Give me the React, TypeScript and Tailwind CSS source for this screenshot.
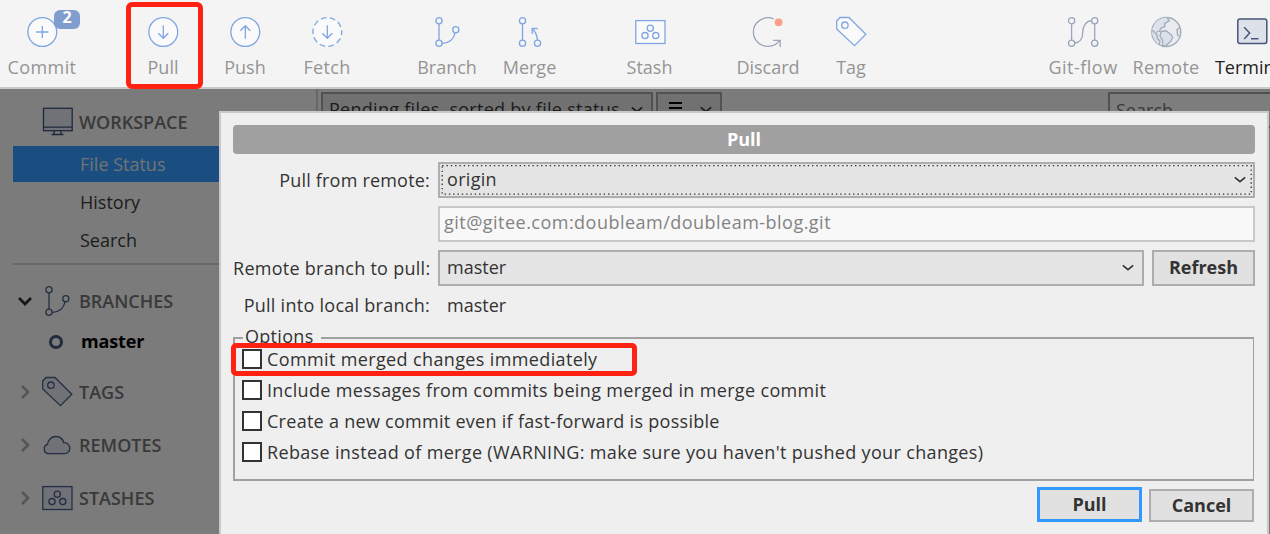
import type { ReactNode } from "react";

type IconProps = { className?: string };

function Icon({ className = "", children }: IconProps & { children: ReactNode }) {
  return (
    <svg viewBox="0 0 32 32" className={`h-8 w-8 shrink-0 ${className}`} fill="none" stroke="currentColor" strokeWidth="1.3">
      {children}
    </svg>
  );
}

const CommitIcon = () => (
  <Icon>
    <circle cx="16.3" cy="16" r="14.4" fill="#fafafb" />
    <path d="M10.3 16h12M16.3 10v12" />
  </Icon>
);

const PullIcon = () => (
  <Icon>
    <circle cx="16.3" cy="16" r="14.4" fill="#fafafb" />
    <path d="M16.3 9.3v13M11.3 17.3l5 5 5-5" />
  </Icon>
);

const PushIcon = () => (
  <Icon>
    <circle cx="16.3" cy="16" r="14.4" fill="#fafafb" />
    <path d="M16.3 22.7v-13M11.3 14.7l5-5 5 5" />
  </Icon>
);

const FetchIcon = () => (
  <Icon>
    <circle cx="16.3" cy="16" r="14.4" fill="#fafafb" strokeDasharray="5.8 3.25" strokeDashoffset="2.5" />
    <path d="M16.3 9.3v13M11.3 17.3l5 5 5-5" />
  </Icon>
);

const BranchIcon = ({ className }: IconProps) => (
  <Icon className={className}>
    <circle cx="8" cy="4.7" r="3.1" />
    <circle cx="8" cy="27.3" r="3.1" />
    <circle cx="24.8" cy="13.7" r="3.1" />
    <path d="M8 7.8v16.4M11.1 27.3c6.5.3 12-4 12.7-10.6" />
  </Icon>
);

const MergeIcon = () => (
  <Icon>
    <circle cx="8.5" cy="4.7" r="3.1" />
    <circle cx="8.5" cy="27.3" r="3.1" />
    <circle cx="23.5" cy="27.3" r="3.1" />
    <path d="M8.5 7.8v16.4M23.4 24.2c0-4-1.6-8-5.2-11.5M18.2 18v-5.5h5.4" />
  </Icon>
);

const StashIcon = ({ className, fill = "#fafafb" }: IconProps & { fill?: string }) => (
  <Icon className={className}>
    <rect x="1.8" y="4.6" width="29.2" height="22.9" fill={fill} />
    <circle cx="16.3" cy="12.3" r="3.1" />
    <circle cx="11" cy="19.6" r="3.1" />
    <circle cx="21.8" cy="19.6" r="3.1" />
  </Icon>
);

const DiscardIcon = () => (
  <Icon className="text-[#9aa5b8]">
    <path d="M21.6 2.8C12.6-.8 1.4 5.5 1.4 16c0 8 6.5 14.4 14.4 14.4 5.4 0 9.800-2.600 12-6.200M21.200 24.300h7v6.700" />
    <circle cx="26.6" cy="6.3" r="3.9" fill="#fb9e8a" stroke="none" />
  </Icon>
);

const TagIcon = ({ className, fill = "#fafafb" }: IconProps & { fill?: string }) => (
  <Icon className={className}>
    <path d="M1.7 5 5 1.5h9l16.8 16.7L19.5 29.7 1.7 13z" fill={fill} />
    <circle cx="9.9" cy="9.2" r="3.2" />
  </Icon>
);

const GitFlowIcon = () => (
  <Icon className="text-[#9aa5b8]">
    <circle cx="4.6" cy="4.7" r="3.1" />
    <circle cx="4.6" cy="27.3" r="3.1" />
    <circle cx="27.7" cy="4.7" r="3.1" />
    <circle cx="27.7" cy="27.3" r="3.1" />
    <path d="M4.6 7.8v16.4M27.7 7.8v16.4M7.7 27c5-.5 8-4 8-10.5S19 5 24.6 4.7" />
  </Icon>
);

const RemoteIcon = () => (
  <Icon className="text-[#a2acbb]">
    <circle cx="16.3" cy="16" r="14.5" fill="#e9ebef" />
    <path d="M4 8.500C7 4 11.500 1.600 17 1.500l2 3.300-4.500 3 .5 3-4.500 1.500-1 3-3.500.5 5.500 4.500-.5 9.200C4 26.500 1 19 2.500 12l3.500 3z" fill="#dbe0e9" stroke="none" />
    <path d="M17 1.500l2.200 3.300-4.700 2.800.5 3-4 1.500-1.500 3.200-3 .9M2.300 14l4.500 4.500.5 4 2.500 2.500-.3 4" />
    <path d="m11 15.500 5-.7 5.500 4.200 1.200 2.500-2 3.800-4.500 4-3.400 1-.3-6.300-2.500-4z" fill="#dbe0e9" />
    <path d="M29.800 11.500 27 13.500l.5 5.500 2 1.500" fill="#dbe0e9" />
  </Icon>
);

const TerminalIcon = () => (
  <Icon className="text-[#475678]">
    <rect x="1.8" y="3" width="29" height="24.4" rx="2.2" fill="#dde1ea" strokeWidth="1.5" />
    <path d="m8.200 11.200 5.500 5.800-5.500 6M15 22.800h7.500" strokeWidth="1.5" />
  </Icon>
);

const MonitorIcon = () => (
  <Icon className="text-[#1f283c]">
    <rect x="2.5" y="2.3" width="28.7" height="22.4" fill="#707277" />
    <path d="M2.500 21.200h28.700M13.500 25l-.8 3M19.500 25l.8 3M10.500 28.500h12" />
  </Icon>
);

const CloudIcon = () => (
  <Icon className="text-[#252f43]">
    <path d="M7.600 24.700a4.800 4.800 0 0 1-1-9.400C7 10.800 10.300 7.500 14.800 7.500c4 0 7 2.300 7.800 6.200 3.800-.4 6.200 2.400 6.200 5.600 0 3-2.300 5.400-5.400 5.400z" fill="#707277" />
  </Icon>
);

function Chevron({ className = "" }: IconProps) {
  return (
    <svg viewBox="0 0 12 8" className={`h-2 w-3 shrink-0 ${className}`} fill="none" stroke="currentColor" strokeWidth="1.6">
      <path d="m.8 1.300 5.200 4.400 5.200-4.400" />
    </svg>
  );
}

function Tool({ label, icon, className = "", textClass = "text-[#949494]" }: { label: string; icon: ReactNode; className?: string; textClass?: string }) {
  return (
    <div className={`relative flex h-[87px] w-[82px] shrink-0 flex-col items-center pt-4 text-[#7fa6e2] ${className}`}>
      {icon}
      <span className={`mt-1.5 text-[18px] leading-[26px] whitespace-nowrap ${textClass}`}>{label}</span>
    </div>
  );
}

function Section({ open, icon, label, className = "" }: { open?: boolean; icon: ReactNode; label: string; className?: string }) {
  return (
    <div className={`flex h-8 items-center pl-[17px] ${className}`}>
      <svg viewBox="0 0 16 16" className={`h-4 w-4 ${open ? "text-[#171717]" : "text-[#565656]"}`} fill="none" stroke="currentColor" strokeWidth="2.7">
        <path d={open ? "M2 5l6 6 6-6" : "M5 2l6 6-6 6"} />
      </svg>
      <div className="ml-2 flex items-center">{icon}</div>
      <span className="ml-1.5 text-[18px] font-semibold text-[#393939]">{label}</span>
    </div>
  );
}

function Option({ label, textClass }: { label: string; textClass: string }) {
  return (
    <label className="flex h-[31px] items-center">
      <span className="h-5 w-5 shrink-0 border-2 border-[#333] bg-white" />
      <span className={`ml-[5px] whitespace-nowrap ${textClass}`}>{label}</span>
    </label>
  );
}

export default function App() {
  return (
    <div className="relative flex h-[534px] w-[1270px] flex-col overflow-hidden bg-[#7b7b7b] font-['Open_Sans',sans-serif] text-[18px] leading-6 text-[#333]">
      <header className="flex h-[89px] shrink-0 border-b-2 border-[#c9c9c9] bg-[#f4f4f4] pl-[1px]">
        <Tool
          label="Commit"
          textClass="tracking-[0.4px] text-[#949494]"
          icon={
            <>
              <CommitIcon />
              <span className="absolute top-[10px] left-[53px] h-[19px] w-[26px] rounded-md bg-[#7f9ecd] text-center text-[16px] leading-[15px] font-bold text-white">2</span>
            </>
          }
        />
        <Tool label="Pull" icon={<PullIcon />} className="ml-[39px]" />
        <Tool label="Push" icon={<PushIcon />} />
        <Tool label="Fetch" icon={<FetchIcon />} textClass="tracking-[0.3px] text-[#949494]" />
        <Tool label="Branch" icon={<BranchIcon />} className="ml-[38px]" />
        <Tool label="Merge" icon={<MergeIcon />} className="ml-[0.5px]" />
        <Tool label="Stash" icon={<StashIcon />} className="ml-[38px]" />
        <Tool label="Discard" icon={<DiscardIcon />} className="ml-[36.5px]" />
        <Tool label="Tag" icon={<TagIcon />} className="ml-[1px]" />
        <Tool label="Git-flow" icon={<GitFlowIcon />} className="ml-[150px]" textClass="tracking-[0.5px] text-[#949494]" />
        <Tool label="Remote" icon={<RemoteIcon />} className="ml-[1px]" textClass="tracking-[0.3px] text-[#949494]" />
        <Tool label="Terminal" icon={<TerminalIcon />} className="ml-[4px]" textClass="text-[#222]" />
      </header>

      <div className="flex flex-1">
        <aside className="w-[318px] shrink-0 border-r-2 border-[#676767] pt-[17px]">
          <div className="flex h-8 items-center pl-[41px]">
            <MonitorIcon />
            <span className="ml-1.5 font-semibold text-[#393939]">WORKSPACE</span>
          </div>
          <div className="mt-2 ml-[13px] flex h-9 items-center bg-[#1a4e80] pl-[67px] text-[#747474]">File Status</div>
          <div className="mt-px ml-[13px] flex h-[38px] items-center pl-[67px] text-[#1b1b1b]">History</div>
          <div className="ml-[13px] flex h-[38px] items-center pl-[67px] text-[#1b1b1b]">Search</div>
          <div className="mt-[4px] ml-[13px] h-0.5 bg-[#676767]" />
          <Section open icon={<BranchIcon className="text-[#252f43]" />} label="BRANCHES" className="mt-[20px]" />
          <div className="mt-[13px] flex h-6 items-center pl-[49px] font-bold text-black">
            <span className="h-[14px] w-[14px] rounded-full border-[3px] border-[#1f2a3d]" />
            <span className="ml-[18px] pb-0.5 tracking-[-0.15px]">master</span>
          </div>
          <Section icon={<TagIcon className="text-[#252f43]" fill="#707277" />} label="TAGS" className="mt-[22px]" />
          <Section icon={<CloudIcon />} label="REMOTES" className="mt-[21px]" />
          <Section icon={<StashIcon className="text-[#252f43]" fill="#707277" />} label="STASHES" className="mt-[21px]" />
        </aside>
        <main className="flex flex-1 items-start pt-[3px] pl-[3px] text-[#1b1b1b]">
          <div className="flex h-9 w-[332px] items-center justify-between border-2 border-[#515151] bg-[#717171] pr-2 pl-[6px]">
            <span className="pb-0.5 tracking-[0.28px] whitespace-nowrap">Pending files, sorted by file status</span>
            <Chevron />
          </div>
          <div className="ml-[3px] flex h-9 w-[66px] items-center justify-between border-2 border-[#515151] bg-[#717171] pr-2 pl-[11px]">
            <span className="flex flex-col gap-[3px] pb-1 text-black">
              <i className="h-0.5 w-[13px] bg-black" />
              <i className="h-0.5 w-[13px] bg-black" />
              <i className="h-0.5 w-[13px] bg-black" />
            </span>
            <Chevron />
          </div>
          <div className="ml-auto flex h-9 w-[162px] items-center border-2 border-r-0 border-[#515151] bg-[#7d7d7d] pl-[6px] text-[#393939]">Search</div>
        </main>
      </div>

      <div className="absolute top-[111px] left-[219px] flex h-[440px] w-[1050px] flex-col border-2 border-[#c9c9c9] bg-[#efefef] px-3 pt-3">
        <h1 className="h-[29px] rounded bg-[#a0a0a0] text-center leading-[28px] font-bold text-white">Pull</h1>
        <div className="mt-2 flex h-9 items-center">
          <span className="w-[197px] text-right tracking-[0.2px] whitespace-nowrap">Pull from remote:</span>
          <div className="relative ml-2 flex h-9 flex-1 items-center justify-between border-2 border-[#adadad] bg-[#e5e5e5] pr-[7px] pl-[7px]">
            <svg className="absolute inset-0 h-full w-full" fill="none" stroke="#2e2e2e" strokeWidth="1.3" strokeDasharray="1.4 2.9">
              <rect x="2.2" y="1.7" width="809" height="28.4" />
            </svg>
            <span className="pb-0.5 tracking-[0.3px]">origin</span>
            <Chevron />
          </div>
        </div>
        <div className="mt-2 ml-[205px] flex h-9 items-center border-2 border-[#c8c8c8] bg-[#f8f8f8] pb-[5px] pl-[4px] tracking-[0.48px] text-[#838383]">git@gitee.com:doubleam/doubleam-blog.git</div>
        <div className="mt-2 flex h-9 items-center">
          <span className="w-[197px] text-right tracking-[0.27px] whitespace-nowrap">Remote branch to pull:</span>
          <div className="ml-2 flex h-9 w-[706px] items-center justify-between border-2 border-[#adadad] bg-[#e5e5e5] pr-2 pl-[7px]">
            <span className="pb-0.5">master</span>
            <Chevron />
          </div>
          <button className="ml-2 h-9 flex-1 border-2 border-[#adadad] bg-[#e1e1e1] pb-0.5 font-bold">Refresh</button>
        </div>
        <div className="mt-[7px] flex h-6 items-center">
          <span className="w-[197px] text-right tracking-[0.27px] whitespace-nowrap">Pull into local branch:</span>
          <span className="ml-[17px]">master</span>
        </div>
        <div className="relative mt-5 mr-px h-[144px] border-2 border-r-1 border-[#a0a0a0] pt-[4px] pl-[7px]">
          <span className="absolute -top-[15px] left-[8px] w-[78px] bg-[#efefef] pl-0.5 tracking-[0.3px]">Options</span>
          <Option label="Commit merged changes immediately" textClass="tracking-[0.37px]" />
          <Option label="Include messages from commits being merged in merge commit" textClass="tracking-[0.345px]" />
          <Option label="Create a new commit even if fast-forward is possible" textClass="tracking-[0.28px]" />
          <Option label="Rebase instead of merge (WARNING: make sure you haven't pushed your changes)" textClass="tracking-[0.34px]" />
        </div>
        <div className="mt-1.5 mr-px flex items-end justify-end gap-[7px]">
          <button className="h-[35px] w-[105px] border-3 border-[#3399ff] bg-[#e1e1e1] pb-0.5 font-bold">Pull</button>
          <button className="h-[33px] w-[105px] border-2 border-[#adadad] bg-[#e1e1e1] pb-0.5 font-bold">Cancel</button>
        </div>
      </div>

      <div className="absolute top-[2px] left-[126px] h-[87px] w-[77px] rounded-[6px] border-5 border-[#ff2112]" />
      <div className="absolute top-[343px] left-[231px] h-[33px] w-[406px] rounded-[5px] border-5 border-[#ff2112]" />
    </div>
  );
}
